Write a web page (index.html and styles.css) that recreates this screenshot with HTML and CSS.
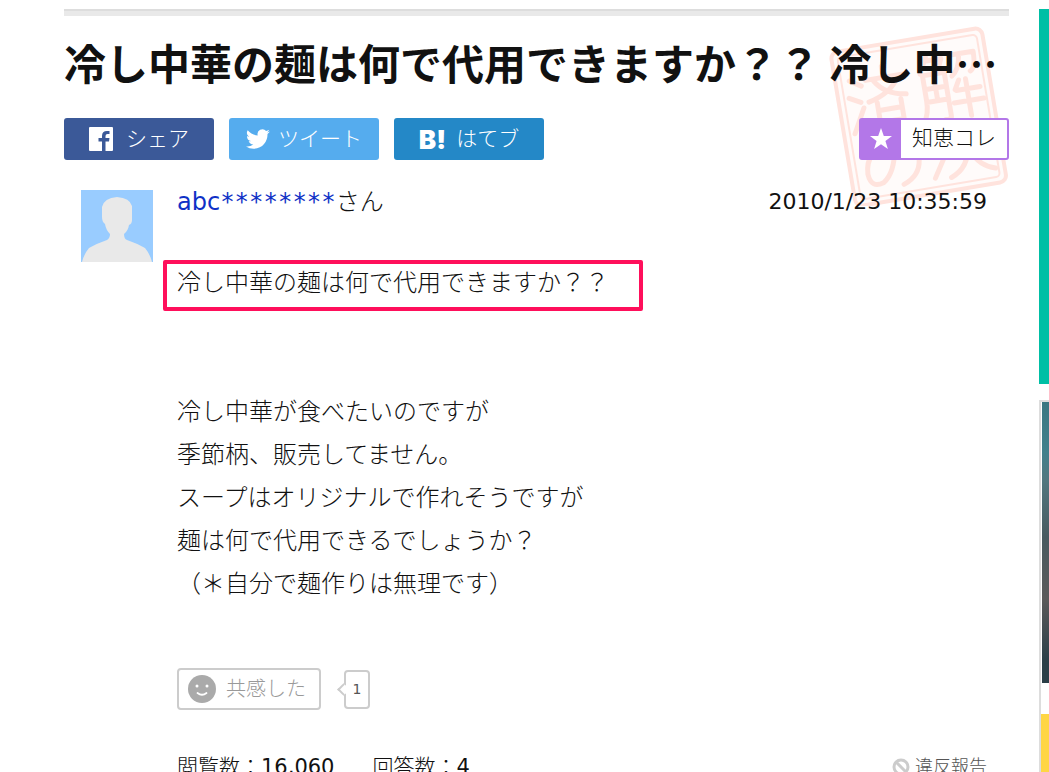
FILE: index.html
```
<!DOCTYPE html>
<html lang="ja">
<head>
    <meta charset="UTF-8">
    <title>冷し中華の麺は何で代用できますか？？</title>
    <link rel="stylesheet" href="styles.css">
</head>
<body>
<div class="page">
    <main class="question">
        <svg class="stamp" viewBox="0 0 180 180" aria-hidden="true">
            <g transform="rotate(-9.5 90 90)" fill="none" stroke="#ffe3dd" stroke-linecap="round" stroke-linejoin="round">
                <rect x="13" y="13" width="153" height="156" rx="7" fill="#fffbfa" stroke-width="4"/>
                <rect x="19" y="19" width="141" height="144" rx="4" stroke-width="2"/>
                <g stroke-width="5">
                    <!-- 済 -->
                    <path d="M27 44l11 7M24 61l11 6M24 97l13-24M61 35v10M43 46h38M51 48q9 15 30 18M75 48q-9 15-32 20M51 70v16q0 9-6 19M75 70v35M52 78h22M52 90h22"/>
                    <!-- 解 -->
                    <path d="M106 33l-8 16M106 37h15l-5 11M100 51v26q0 12-6 21M100 51h22v44q0 4-6 3M100 65h21M100 78h21M111 52v26M129 35h25q0 17-6 19M139 37q-2 14-10 19M135 61l-5 9M131 71h24M127 83h30M142 61v37"/>
                    <!-- み -->
                    <path d="M61 116q-4 26-17 34q-13 4-14-11q1-24 28-26q26 0 25 20q-2 16-19 22"/>
                    <!-- 決 -->
                    <path d="M100 107l9 6M97 123l9 6M96 154l14-22M120 112h26v18M113 131h42M133 102v25q-2 22-21 29M135 133q6 16 22 21"/>
                </g>
            </g>
        </svg>

        <h1>冷し中華の麺は何で代用できますか？？ 冷し中…</h1>

        <div class="toolbar">
            <button class="share facebook" type="button">
                <svg width="24" height="24" viewBox="0 0 24 24"><rect width="24" height="24" rx="1" fill="#fff"/><path d="M13 24v-9.500H9.500v-3.500H13V9q0-5 5-5h2.500v3H18.500q-2 0-2 2v2h4l-.5 3.500h-3.500V24z" fill="#3b5998"/></svg>
                <span>シェア</span>
            </button>
            <button class="share twitter" type="button">
                <svg width="24" height="24" viewBox="0 0 24 24"><path fill="#fff" d="M23.900 4.600a10 10 0 0 1-2.800.8 4.900 4.900 0 0 0 2.100-2.700 9.900 9.900 0 0 1-3.100 1.200 4.900 4.900 0 0 0-8.400 4.500A14 14 0 0 1 1.700 3.200a4.900 4.900 0 0 0 1.500 6.500 4.900 4.900 0 0 1-2.200-.6v.1a4.900 4.900 0 0 0 3.900 4.800 5 5 0 0 1-2.200.1 4.900 4.900 0 0 0 4.600 3.400A9.900 9.900 0 0 1 0 19.500a13.900 13.900 0 0 0 7.500 2.200c9.100 0 14-7.500 14-14v-.6a10 10 0 0 0 2.400-2.500z"/></svg>
                <span>ツイート</span>
            </button>
            <button class="share hatena" type="button">
                <b class="hatena-mark">B!</b>
                <span>はてブ</span>
            </button>
            <button class="collect" type="button">
                <span class="star"><svg width="24" height="24" viewBox="0 0 24 24"><path fill="#fff" d="M12 1l2.800 8H23l-6.600 5 2.500 8L12 17.200 5.100 22l2.500-8L1 9h8.200z"/></svg></span>
                <span class="collect-label">知恵コレ</span>
            </button>
        </div>

        <div class="post">
            <svg class="avatar" viewBox="0 0 72 72" aria-hidden="true">
                <rect width="72" height="72" fill="#99ccff"/>
                <path fill="#e9e9e9" d="M1 72q2-8 7-14q9-5 18-8q3-2 3-6q-4-4-5-10q-3-2-3-7V17q2-9 15-10q13 1 15 9v14q0 4-3 5q-1 6-5 9q0 5 3 6q9 3 18 8q5 6 7 14z"/>
            </svg>
            <div class="content">
                <div class="meta">
                    <p class="author"><a href="#">abc<span class="mask">********</span></a>さん</p>
                    <time datetime="2010-01-23T10:35:59">2010/1/23 10:35:59</time>
                </div>
                <p class="lead">冷し中華の麺は何で代用できますか？？</p>
                <p class="text">冷し中華が食べたいのですが<br>
                    季節柄、販売してません。<br>
                    スープはオリジナルで作れそうですが<br>
                    麺は何で代用できるでしょうか？<br>
                    （＊自分で麺作りは無理です）</p>
                <div class="empathy">
                    <button class="empathy-button" type="button">
                        <svg width="28" height="28" viewBox="0 0 28 28"><circle cx="14" cy="14" r="14" fill="#aaa"/><circle cx="9" cy="11" r="1.500" fill="#fff"/><circle cx="19" cy="11" r="1.500" fill="#fff"/><path d="M9.500 18q4.500 3.500 9 0" fill="none" stroke="#fff" stroke-width="1.800" stroke-linecap="round"/></svg>
                        <span>共感した</span>
                    </button>
                    <span class="count">1</span>
                </div>
                <div class="stats">
                    <span>閲覧数：<span class="num">16,060</span></span>
                    <span>回答数：<span class="num">4</span></span>
                    <a class="report" href="#">
                        <svg width="18" height="18" viewBox="0 0 18 18"><g fill="none" stroke="#ccc" stroke-width="3"><circle cx="9" cy="9" r="7"/><path d="M4 4l10 10"/></g></svg>
                        <span>違反報告</span>
                    </a>
                </div>
            </div>
        </div>
    </main>

    <aside class="side">
        <div class="banner"></div>
        <div class="ad">
            <div class="ad-photo"></div>
            <div class="ad-caption"></div>
            <div class="ad-action"></div>
        </div>
    </aside>
</div>
</body>
</html>
```

FILE: styles.css
```
*, *::before {
    box-sizing: border-box;
}
body {
    margin: 0;
    background-color: #fff;
    color: #111;
    font-family: "DejaVu Sans", "Noto Sans CJK JP", sans-serif;
    font-size: 21px;
    font-weight: 300;
    overflow: hidden;
}
h1, p {
    margin: 0;
}
button {
    font-family: inherit;
    font-size: 21px;
    font-weight: inherit;
    padding: 0;
    border: none;
    cursor: pointer;
}
a {
    color: #0f31c6;
    text-decoration: none;
}
.page {
    display: flex;
    gap: 30px;
    padding: 9px 0 0 64px;
}
.question {
    position: relative;
    flex: 1;
    min-width: 0;
    border-top: 2px solid #ddd;
}
.question::before {
    content: "";
    display: block;
    height: 5px;
    background-color: #e9e9e9;
}
.stamp {
    position: absolute;
    top: 15px;
    right: 0;
    width: 180px;
    height: 180px;
    z-index: -1;
}
h1 {
    margin-top: 16px;
    font-size: 42px;
    line-height: 60px;
    font-family: "Noto Sans CJK JP", sans-serif;
    font-weight: bold;
    white-space: nowrap;
}

/* share buttons */
.toolbar {
    display: flex;
    gap: 15px;
    margin-top: 26px;
}
.share {
    display: flex;
    align-items: center;
    justify-content: center;
    gap: 13px;
    width: 150px;
    height: 42px;
    border-radius: 3px;
    color: #fff;
}
.share span {
    padding-bottom: 4px;
}
.facebook {
    background-color: #3b5998;
}
.twitter {
    gap: 8px;
    background-color: #55acee;
}
.hatena {
    gap: 10px;
    background-color: #2488c7;
}
.hatena-mark {
    font-family: Inter, sans-serif;
    font-size: 26px;
    font-weight: 900;
}
.collect {
    display: flex;
    width: 150px;
    height: 42px;
    margin-left: auto;
    border: 2px solid #b377e8;
    border-radius: 3px;
    background-color: #fff;
    color: #111;
}
.star {
    display: flex;
    align-items: center;
    justify-content: center;
    width: 40px;
    height: 38px;
    background-color: #b377e8;
}
.collect-label {
    flex: 1;
    line-height: 36px;
}

/* question */
.post {
    display: flex;
    gap: 24px;
    padding: 30px 22px 0 17px;
}
.avatar {
    flex: none;
    width: 72px;
    height: 72px;
}
.content {
    flex: 1;
}
.meta {
    display: flex;
    justify-content: space-between;
    line-height: 24px;
}
.author {
    font-size: 24px;
}
.author a, .meta time, .count, .num {
    font-weight: normal;
}
.mask {
    font-family: "DejaVu Sans Mono", monospace;
}
.meta time {
    font-size: 22px;
}
.lead {
    position: relative;
    margin-top: 48px;
    font-size: 24px;
    line-height: 43px;
}
.lead::before {
    content: "";
    position: absolute;
    top: -2px;
    left: -14px;
    width: 480px;
    height: 51px;
    border: 4px solid #ff0f5b;
    border-radius: 2px;
}
.text {
    margin-top: 86px;
    font-size: 24px;
    line-height: 43px;
}
.empathy {
    display: flex;
    align-items: center;
    gap: 23px;
    margin-top: 62px;
}
.empathy-button {
    display: flex;
    align-items: center;
    gap: 10px;
    width: 144px;
    height: 42px;
    padding-left: 9px;
    border: 2px solid #ccc;
    border-radius: 4px;
    background-color: #fff;
    color: #999;
    font-size: 20px;
}
.empathy-button span {
    padding-bottom: 4px;
}
.count {
    position: relative;
    width: 26px;
    border: 2px solid #ccc;
    border-radius: 4px;
    color: #555;
    font-size: 14px;
    line-height: 35px;
    text-align: center;
}
.count::before {
    content: "";
    position: absolute;
    top: 13px;
    left: -7px;
    width: 9px;
    height: 9px;
    border: solid #ccc;
    border-width: 0 0 2px 2px;
    background-color: #fff;
    transform: rotate(45deg);
}
.stats {
    display: flex;
    align-items: center;
    gap: 38px;
    margin-top: 42px;
    line-height: 30px;
}
.report {
    display: flex;
    align-items: center;
    gap: 5px;
    margin-left: auto;
    color: #555;
    font-size: 18px;
}

/* right column, runs off the window */
.side {
    flex: none;
    width: 10px;
}
.banner {
    height: 375px;
    background-color: #00bfa5;
}
.ad {
    margin-top: 16px;
    border: solid #ddd;
    border-width: 2px 0 0 2px;
}
.ad-photo {
    height: 281px;
    margin-left: 1px;
    background: linear-gradient(#3b7782, #42808c 18%, #52777f 28%, #485a60 48%, #5b5a5a 70%, #2b3f48 92%);
}
.ad-caption {
    height: 31px;
}
.ad-action {
    height: 60px;
    background-color: #ffd644;
}
```
